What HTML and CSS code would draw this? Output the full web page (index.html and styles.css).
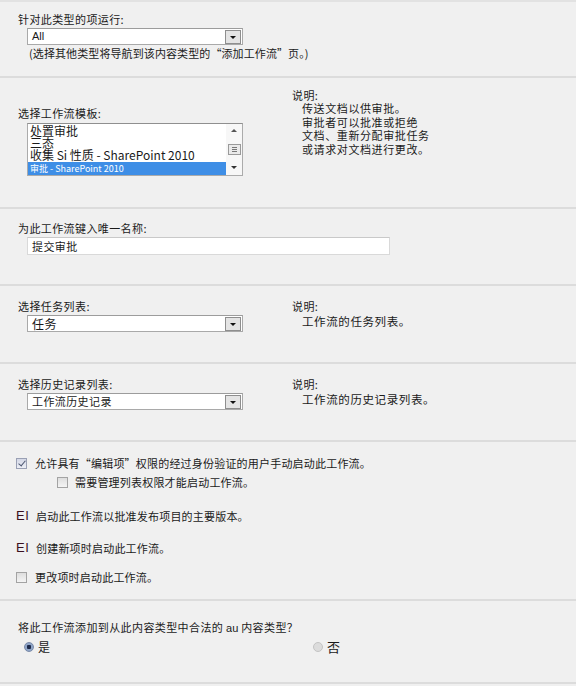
FILE: index.html
```html
<!DOCTYPE html>
<html lang="zh-CN">
<head>
    <meta charset="UTF-8">
    <title>添加工作流</title>
    <link rel="stylesheet" href="styles.css">
</head>
<body>
    <form class="workflow-form">
        <!-- Content type to run on -->
        <section class="row row-type">
            <div class="col">
                <div class="label">针对此类型的项运行:</div>
                <div class="select">
                    <span class="select-text latin">All</span>
                    <span class="select-btn"></span>
                </div>
                <div class="note">(选择其他类型将导航到该内容类型的“添加工作流”页。)</div>
            </div>
        </section>

        <!-- Template -->
        <section class="row row-template">
            <div class="col">
                <div class="label">选择工作流模板:</div>
                <div class="listbox">
                    <ul class="list-items">
                        <li>处置审批</li>
                        <li>三态</li>
                        <li>收集 Si 性质 - SharePoint 2010</li>
                        <li class="selected">审批 - SharePoint 2010</li>
                    </ul>
                    <div class="scrollbar">
                        <span class="arrow-up"></span>
                        <span class="thumb"><i></i><i></i><i></i></span>
                        <span class="arrow-down"></span>
                    </div>
                </div>
            </div>
            <div class="desc desc-top">
                <div>说明:</div>
                <div class="desc-line">传送文档以供审批。</div>
                <div class="desc-line">审批者可以批准或拒绝</div>
                <div class="desc-line">文档、重新分配审批任务</div>
                <div class="desc-line">或请求对文档进行更改。</div>
            </div>
        </section>

        <!-- Name -->
        <section class="row row-name">
            <div class="col">
                <div class="label">为此工作流键入唯一名称:</div>
                <div class="textbox">提交审批</div>
            </div>
        </section>

        <!-- Task list -->
        <section class="row row-list">
            <div class="col">
                <div class="label">选择任务列表:</div>
                <div class="select select-big">
                    <span class="select-text">任务</span>
                    <span class="select-btn"></span>
                </div>
            </div>
            <div class="desc">
                <div>说明:</div>
                <div class="desc-line">工作流的任务列表。</div>
            </div>
        </section>

        <!-- History list -->
        <section class="row row-list">
            <div class="col">
                <div class="label">选择历史记录列表:</div>
                <div class="select">
                    <span class="select-text">工作流历史记录</span>
                    <span class="select-btn"></span>
                </div>
            </div>
            <div class="desc">
                <div>说明:</div>
                <div class="desc-line">工作流的历史记录列表。</div>
            </div>
        </section>

        <!-- Start options -->
        <section class="row row-start">
            <div class="options">
                <div class="opt"><span class="check checked"></span>允许具有“编辑项”权限的经过身份验证的用户手动启动此工作流。</div>
                <div class="opt opt-sub"><span class="check"></span>需要管理列表权限才能启动工作流。</div>
                <div class="opt opt-ei"><span class="ei">EI</span>启动此工作流以批准发布项目的主要版本。</div>
                <div class="opt opt-ei opt-ei2"><span class="ei">EI</span>创建新项时启动此工作流。</div>
                <div class="opt opt-last"><span class="check"></span>更改项时启动此工作流。</div>
            </div>
        </section>

        <!-- Child content types -->
        <section class="row row-child">
            <div class="full">
                <div class="label">将此工作流添加到从此内容类型中合法的 <span class="latin">au</span> 内容类型？</div>
                <div class="radios">
                    <span class="radio-item"><span class="radio on"></span>是</span>
                    <span class="radio-item radio-no"><span class="radio"></span>否</span>
                </div>
            </div>
        </section>
    </form>
</body>
</html>
```

FILE: styles.css
```css
* {
    margin: 0;
    padding: 0;
    box-sizing: border-box;
}
body {
    font-family: "Noto Sans CJK SC", "Noto Sans", sans-serif;
    font-size: 11px;
    line-height: 14px;
    letter-spacing: 0.4px;
    color: #1a1a1a;
    background-color: #f0f0f0;
    width: 576px;
    height: 686px;
    overflow: hidden;
}
.latin {
    font-family: "Liberation Sans", Arial, sans-serif;
    letter-spacing: 0;
}
.workflow-form {
    border-top: 2px solid #e2e2e2;
    border-bottom: 2px solid #dcdcdc;
}

/* Section rows */
.row {
    display: flex;
    border-bottom: 2px solid #dcdcdc;
    padding-left: 18px;
}
.row:last-child {
    border-bottom: none;
}
.col {
    width: 274px;
    flex-shrink: 0;
}
.row-type {
    height: 76px;
    padding-top: 10px;
}
.row-template {
    height: 131px;
}
.row-template .col {
    padding-top: 28px;
}
.row-name {
    height: 77px;
    padding-top: 12px;
}
.row-list {
    height: 78px;
    padding-top: 13px;
}
.row-start {
    height: 159px;
    padding-left: 16px;
    padding-top: 14px;
}
.row-child {
    height: 81px;
    padding-top: 19px;
}

/* Dropdown */
.select {
    display: flex;
    align-items: center;
    width: 216px;
    height: 17px;
    margin: 2px 0 1px 9px;
    background: #fff;
    border: 1px solid #a9a9a9;
    border-top-color: #9c9c9c;
}
.select-text {
    flex: 1;
    padding-left: 4px;
    font-size: 11px;
    line-height: 15px;
    white-space: nowrap;
    overflow: hidden;
}
.select-big .select-text {
    font-size: 12px;
}
.select-btn {
    position: relative;
    width: 16px;
    height: 14px;
    margin-right: 1px;
    background: #e4e4e4;
    border: 1px solid #8e8e8e;
}
.select-btn::after {
    content: "";
    position: absolute;
    left: 4px;
    top: 5px;
    border-left: 3px solid transparent;
    border-right: 3px solid transparent;
    border-top: 3px solid #111;
}
.note {
    padding-left: 11px;
    white-space: nowrap;
    letter-spacing: 0.1px;
}

/* Template list box */
.listbox {
    display: flex;
    width: 216px;
    height: 53px;
    margin: 3px 0 0 9px;
    background: #fff;
    border: 1px solid #ababab;
    border-top-color: #8f8f8f;
    overflow: hidden;
}
.list-items {
    list-style: none;
    flex: 1;
    min-width: 0;
    overflow: hidden;
    padding-top: 1px;
    font-size: 12px;
    line-height: 12px;
    letter-spacing: 0;
}
.list-items li {
    height: 12px;
    padding-left: 2px;
    white-space: nowrap;
}
.list-items .selected {
    height: 14px;
    margin-top: 1px;
    background: #3e8ee6;
    color: #fff;
    font-size: 9px;
    line-height: 14px;
}
.scrollbar {
    display: flex;
    flex-direction: column;
    align-items: center;
    justify-content: space-between;
    width: 16px;
    padding: 5px 0 6px;
    background: #f7f7f7;
}
.arrow-up,
.arrow-down {
    width: 0;
    height: 0;
    border-left: 3px solid transparent;
    border-right: 3px solid transparent;
}
.arrow-up {
    border-bottom: 3px solid #555;
}
.arrow-down {
    border-top: 3px solid #333;
}
.thumb {
    display: flex;
    flex-direction: column;
    justify-content: center;
    gap: 1px;
    width: 13px;
    height: 11px;
    padding: 0 3px;
    background: #eaeaea;
    border: 1px solid #9a9a9a;
}
.thumb i {
    display: block;
    height: 1px;
    background: #777;
}

/* Description column */
.desc-line {
    padding-left: 10px;
    letter-spacing: 0.6px;
    white-space: nowrap;
}
.desc-top {
    padding-top: 10px;
}
.desc-top .desc-line {
    height: 13.7px;
    line-height: 13.7px;
}
.desc-top .desc-line:first-of-type {
    margin-top: 1px;
}
.row-list .desc-line {
    font-size: 11.5px;
    padding-top: 1px;
}

/* Name text box */
.textbox {
    width: 363px;
    height: 18px;
    margin: 2px 0 0 9px;
    padding-left: 4px;
    background: #fff;
    border: 1px solid #d9d9d9;
    border-top-color: #c9c9c9;
    line-height: 16px;
}

/* Check options */
.opt {
    display: flex;
    align-items: center;
    height: 14px;
    letter-spacing: 0.2px;
}
.check {
    display: inline-block;
    width: 11px;
    height: 11px;
    margin-right: 8px;
    background: linear-gradient(#dedede, #f4f4f4);
    border: 1px solid #a3a3a3;
    position: relative;
}
.check.checked {
    background: linear-gradient(#d4d8e6, #eceef5);
    border-color: #9aa0b4;
}
.check.checked::after {
    content: "";
    position: absolute;
    left: 3px;
    top: 0;
    width: 3px;
    height: 6px;
    border-right: 1.5px solid #4c5670;
    border-bottom: 1.5px solid #4c5670;
    transform: rotate(40deg);
}
.opt-sub {
    margin-top: 5px;
    padding-left: 41px;
}
.opt-sub .check {
    margin-right: 7px;
}
.opt-ei {
    margin-top: 20px;
}
.opt-ei2 {
    margin-top: 18px;
}
.ei {
    width: 20px;
    font-family: "Liberation Sans", Arial, sans-serif;
    font-size: 13px;
    letter-spacing: 0.5px;
    color: #3a0f1e;
}
.opt-last {
    margin-top: 15px;
}

/* Radios */
.radios {
    display: flex;
    padding-left: 6px;
    margin-top: 5px;
    font-size: 12px;
}
.radio-item {
    display: flex;
    align-items: center;
    width: 289px;
}
.radio-no {
    font-size: 13px;
}
.radio {
    display: inline-block;
    width: 10px;
    height: 10px;
    margin-right: 4px;
    border-radius: 50%;
    background: #dcdcdc;
    border: 1px solid #c4c4c4;
}
.radio.on {
    background: radial-gradient(circle, #1d2a4a 0 2px, #8fa5c8 2.5px);
    border-color: #7a8aa8;
}
```
